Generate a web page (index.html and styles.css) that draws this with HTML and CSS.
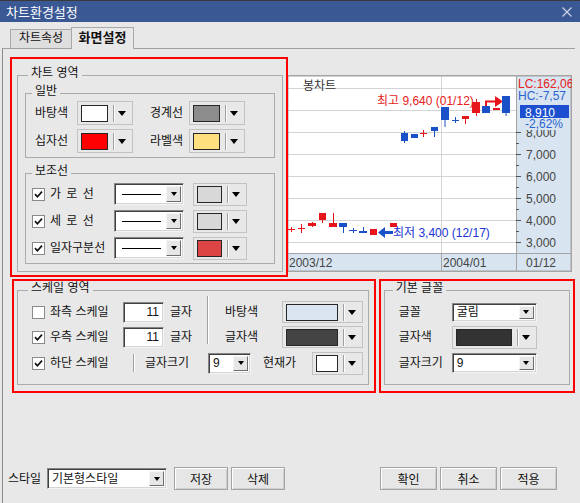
FILE: index.html
```html
<!DOCTYPE html>
<html lang="ko">
<head>
    <meta charset="UTF-8">
    <title>차트환경설정</title>
    <link rel="stylesheet" href="styles.css">
</head>
<body>
    <div class="titlebar">
        <span>차트환경설정</span>
        <svg class="close-btn" width="10" height="10" viewBox="0 0 10 10"><path d="M0.5 0.5L9.5 9.5M9.5 0.5L0.5 9.5"/></svg>
    </div>
    <div class="tabs">
        <div class="tab">차트속성</div>
        <div class="tab active">화면설정</div>
    </div>
    <div class="panel">
        <div class="top-row">
            <div class="redbox box-chart">
                <fieldset class="group g-chart">
                    <legend>차트 영역</legend>
                    <fieldset class="group g-general">
                        <legend>일반</legend>
                        <div class="grow first">
                            <span class="lbl c1">바탕색</span>
                            <div class="cbtn w56"><span class="swatch sw-white"></span><span class="csep"></span><span class="arrow"></span></div>
                            <span class="lbl c2">경계선</span>
                            <div class="cbtn w56"><span class="swatch sw-gray"></span><span class="csep"></span><span class="arrow"></span></div>
                        </div>
                        <div class="grow">
                            <span class="lbl c1">십자선</span>
                            <div class="cbtn w56"><span class="swatch sw-red"></span><span class="csep"></span><span class="arrow"></span></div>
                            <span class="lbl c2">라벨색</span>
                            <div class="cbtn w56"><span class="swatch sw-yellow"></span><span class="csep"></span><span class="arrow"></span></div>
                        </div>
                    </fieldset>
                    <fieldset class="group g-aux">
                        <legend>보조선</legend>
                        <div class="arow first">
                            <span class="check"><svg viewBox="0 0 11 11"><path d="M2 5.2l2.4 2.6 4.6-5.2"/></svg></span>
                            <span class="lbl aux-lbl spaced">가 로 선</span>
                            <div class="field line-combo"><span class="line-sample"></span><span class="dd"><span class="arrow sm"></span></span></div>
                            <div class="cbtn w54"><span class="swatch sw-light"></span><span class="csep"></span><span class="arrow"></span></div>
                        </div>
                        <div class="arow">
                            <span class="check"><svg viewBox="0 0 11 11"><path d="M2 5.2l2.4 2.6 4.6-5.2"/></svg></span>
                            <span class="lbl aux-lbl spaced">세 로 선</span>
                            <div class="field line-combo"><span class="line-sample"></span><span class="dd"><span class="arrow sm"></span></span></div>
                            <div class="cbtn w54"><span class="swatch sw-light"></span><span class="csep"></span><span class="arrow"></span></div>
                        </div>
                        <div class="arow">
                            <span class="check"><svg viewBox="0 0 11 11"><path d="M2 5.2l2.4 2.6 4.6-5.2"/></svg></span>
                            <span class="lbl aux-lbl">일자구분선</span>
                            <div class="field line-combo"><span class="line-sample"></span><span class="dd"><span class="arrow sm"></span></span></div>
                            <div class="cbtn w54"><span class="swatch sw-coral"></span><span class="csep"></span><span class="arrow"></span></div>
                        </div>
                    </fieldset>
                </fieldset>
            </div>

            <svg class="chart" width="285" height="197" viewBox="0 0 285 197">
                <rect x="0" y="0" width="229" height="178" fill="#fff"/>
                <rect x="229" y="0" width="56" height="178" fill="#d8e4f0"/>
                <rect x="0" y="178" width="285" height="19" fill="#d8e4f0"/>
                <path stroke="#d4d4d4" d="M0 13.5H229M0 35.5H229M0 57.5H229M0 79.5H229M0 101.5H229M0 123.5H229M0 145.5H229M0 167.5H229M154.5 0V178"/>
                <path stroke="#a4a4a4" d="M229.5 0V197M0 178.5H285M154.5 178V197"/>
                <rect x="0.75" y="0.75" width="283.5" height="195.5" fill="none" stroke="#a4a4a4" stroke-width="1.5"/>
                <path stroke="#555" d="M229 57.5h5M229 79.5h5M229 101.5h5M229 123.5h5M229 145.5h5M229 167.5h5M229 68.5h3M229 90.5h3M229 112.5h3M229 134.5h3M229 156.5h3"/>

                <text x="16" y="15" fill="#333">봉차트</text>
                <text x="90" y="30" fill="#e82020">최고 9,640 (01/12)</text>
                <text x="106" y="162" fill="#2034d4">최저 3,400 (12/17)</text>

                <g fill="#e8141c" stroke="#e8141c">
                    <path fill="none" d="M1 154.5H8M4.5 152V157M11 153.5H18M14.5 149V158M25.5 147V152M35.5 145V148M46.5 138V149M189.5 24V41M178.5 44V49M133 58.5H140M136.5 55V62"/>
                    <rect x="21" y="148" width="8" height="3" stroke="none"/>
                    <rect x="32" y="138" width="7" height="7" stroke="none"/>
                    <rect x="42" y="148" width="8" height="4" stroke="none"/>
                    <rect x="83" y="154" width="7" height="6" stroke="none"/>
                    <rect x="103" y="148" width="7" height="4" stroke="none"/>
                    <rect x="175" y="41" width="7" height="3" stroke="none"/>
                    <rect x="185" y="27" width="8" height="11" stroke="none"/>
                    <rect x="206" y="33" width="7" height="2" stroke="none"/>
                    <polyline fill="none" stroke-width="2" points="199,31 199,26.5 209,26.5"/>
                    <polygon stroke="none" points="208,21 216,26.5 208,32"/>
                </g>
                <g fill="#1a50c8" stroke="#1a50c8">
                    <path fill="none" d="M56.5 152V158M62 155.5H70M66.5 153V158M76.5 152V156M117.5 56V68M147.5 56V62M158 45V52M165 45.5H172M168.5 42V48M219 38V41"/>
                    <rect x="52" y="148" width="8" height="4" stroke="none"/>
                    <rect x="72" y="156" width="8" height="2" stroke="none"/>
                    <polygon stroke="none" points="91,157.5 98,152 98,163"/>
                    <rect x="97" y="156" width="9" height="3" stroke="none"/>
                    <rect x="114" y="58" width="7" height="8" stroke="none"/>
                    <rect x="124" y="59" width="7" height="4" stroke="none"/>
                    <rect x="144" y="52" width="7" height="4" stroke="none"/>
                    <rect x="154" y="32" width="8" height="13" stroke="none"/>
                    <rect x="195" y="31" width="8" height="7" stroke="none"/>
                    <rect x="215" y="21" width="8" height="17" stroke="none"/>
                </g>

                <text x="231" y="13" fill="#e82020">LC:162,06</text>
                <text x="231" y="25" fill="#2a64d0">HC:-7,57</text>
                <rect x="233" y="30" width="49" height="13" fill="#1c50d0"/>
                <text x="238" y="41.5" fill="#fff">8,910</text>
                <text x="239" y="61.5" fill="#444">8,000</text>
                <rect x="235" y="43" width="48" height="12" fill="#d8e4f0"/>
                <text x="238" y="53" fill="#2a64d0">-2,62%</text>
                <text x="239" y="83.5" fill="#444">7,000</text>
                <text x="239" y="105.5" fill="#444">6,000</text>
                <text x="239" y="127.5" fill="#444">5,000</text>
                <text x="239" y="149.5" fill="#444">4,000</text>
                <text x="239" y="171.5" fill="#444">3,000</text>

                <text x="2" y="192" fill="#444">2003/12</text>
                <text x="156" y="192" fill="#444">2004/01</text>
                <text x="239" y="192" fill="#444">01/12</text>
            </svg>
        </div>

        <div class="bottom-row">
            <div class="redbox box-scale">
                <fieldset class="group g-scale">
                    <legend>스케일 영역</legend>
                    <div class="sbody">
                        <div class="scale-top">
                            <div class="scol">
                                <div class="srow">
                                    <span class="check"></span>
                                    <span class="lbl s-lbl">좌측 스케일</span>
                                    <div class="field num">11</div>
                                    <span class="lbl unit">글자</span>
                                </div>
                                <div class="srow next">
                                    <span class="check"><svg viewBox="0 0 11 11"><path d="M2 5.2l2.4 2.6 4.6-5.2"/></svg></span>
                                    <span class="lbl s-lbl">우측 스케일</span>
                                    <div class="field num">11</div>
                                    <span class="lbl unit">글자</span>
                                </div>
                            </div>
                            <div class="vsep tall"></div>
                            <div class="scol right">
                                <div class="srow">
                                    <span class="lbl r-lbl">바탕색</span>
                                    <div class="cbtn w81"><span class="swatch sw-pale"></span><span class="csep"></span><span class="arrow"></span></div>
                                </div>
                                <div class="srow next">
                                    <span class="lbl r-lbl">글자색</span>
                                    <div class="cbtn w81"><span class="swatch sw-dark"></span><span class="csep"></span><span class="arrow"></span></div>
                                </div>
                            </div>
                        </div>
                        <div class="srow row3">
                            <span class="check"><svg viewBox="0 0 11 11"><path d="M2 5.2l2.4 2.6 4.6-5.2"/></svg></span>
                            <span class="lbl b-lbl">하단 스케일</span>
                            <div class="vsep short"></div>
                            <span class="lbl size-lbl">글자크기</span>
                            <div class="field combo size-combo"><span class="val">9</span><span class="dd"><span class="arrow sm"></span></span></div>
                            <span class="lbl cur-lbl">현재가</span>
                            <div class="cbtn w51"><span class="swatch sw-white"></span><span class="csep"></span><span class="arrow"></span></div>
                        </div>
                    </div>
                </fieldset>
            </div>
            <div class="redbox box-font">
                <fieldset class="group g-font">
                    <legend>기본 글꼴</legend>
                    <div class="fbody">
                        <div class="srow">
                            <span class="lbl f-lbl">글꼴</span>
                            <div class="field combo font-combo"><span class="val">굴림</span><span class="dd"><span class="arrow sm"></span></span></div>
                        </div>
                        <div class="srow next">
                            <span class="lbl f-lbl">글자색</span>
                            <div class="cbtn w85"><span class="swatch sw-ink"></span><span class="csep"></span><span class="arrow"></span></div>
                        </div>
                        <div class="srow row3">
                            <span class="lbl f-lbl">글자크기</span>
                            <div class="field combo fsize-combo"><span class="val">9</span><span class="dd"><span class="arrow sm"></span></span></div>
                        </div>
                    </div>
                </fieldset>
            </div>
        </div>

        <div class="footer">
            <span class="lbl style-lbl">스타일</span>
            <div class="field combo style-combo"><span class="val">기본형스타일</span><span class="dd"><span class="arrow sm"></span></span></div>
            <div class="btn save">저장</div>
            <div class="btn del">삭제</div>
            <div class="btn ok">확인</div>
            <div class="btn">취소</div>
            <div class="btn">적용</div>
        </div>
    </div>
</body>
</html>
```

FILE: styles.css
```css
body {
    margin: 0;
    width: 580px;
    height: 503px;
    overflow: hidden;
    background-color: #e8e8e8;
    font-family: "Liberation Sans", "Noto Sans CJK KR", sans-serif;
    font-size: 12px;
    color: #111;
}
.titlebar {
    height: 22px;
    box-sizing: border-box;
    border-top: 1px solid #3a3a3a;
    background-color: #3a5894;
    color: #fff;
    font-size: 13px;
    display: flex;
    align-items: center;
    justify-content: space-between;
    padding: 0 8px 0 6px;
}
.close-btn path {
    stroke: #c9d2e4;
    stroke-width: 1.2;
}
.tabs {
    display: flex;
    align-items: flex-end;
    height: 26px;
    padding-left: 10px;
}
.tab {
    width: 62px;
    height: 19px;
    box-sizing: border-box;
    border: 1px solid #a8a8a8;
    border-bottom: none;
    background-color: #dedede;
    text-align: center;
    line-height: 17px;
}
.tab.active {
    width: 63px;
    height: 22px;
    margin-left: -1px;
    margin-bottom: -1px;
    background-color: #e8e8e8;
    font-weight: bold;
    font-size: 13px;
    line-height: 20px;
    position: relative;
    z-index: 1;
}
.panel {
    margin-left: 2px;
    width: 573px;
    height: 455px;
    box-sizing: border-box;
    border-top: 1px solid #a0a0a0;
    border-left: 1px solid #8a8a8a;
    padding: 8px 0 0 7px;
}
.top-row {
    display: flex;
    align-items: flex-start;
}
.redbox {
    border: 2px solid #ff0000;
    box-sizing: border-box;
}
.box-chart {
    width: 278px;
    height: 220px;
    position: relative;
    z-index: 1;
}
.chart {
    display: block;
    flex: none;
    margin: 18px 0 0 -1px;
}
.chart text {
    font-family: "Liberation Sans", "Noto Sans CJK KR", sans-serif;
    font-size: 12px;
}

/* group boxes */
.group {
    margin: 0;
    padding: 0;
    min-width: 0;
    box-sizing: border-box;
    border: 1px solid #ababab;
}
.group legend {
    padding: 0 3px 4px;
    line-height: 14px;
    font-size: 12px;
}
.g-chart {
    margin: 7px 0 0 5px;
    width: 266px;
    padding-bottom: 7px;
}
.g-chart > legend {
    margin-left: 10px;
}
.g-general,
.g-aux {
    margin: 0 7px;
    padding-bottom: 4px;
}
.g-aux {
    margin-top: 6px;
}
.g-general legend,
.g-aux legend {
    margin-left: 6px;
}
.lbl {
    flex: none;
    line-height: 14px;
    white-space: nowrap;
}
.grow {
    display: flex;
    align-items: center;
    height: 24px;
    padding-left: 9px;
    margin-top: 4px;
}
.grow.first {
    margin-top: -1px;
}
.grow .c1 {
    width: 36px;
    margin-right: 6px;
}
.grow .c2 {
    width: 36px;
    margin: 0 3px 0 17px;
}
.arow {
    display: flex;
    align-items: center;
    height: 22px;
    padding-left: 6px;
    margin-top: 5px;
}
.arow.first {
    margin-top: 1px;
}
.aux-lbl {
    width: 64px;
}
.spaced {
    word-spacing: 2px;
}

/* controls */
.check {
    flex: none;
    width: 13px;
    height: 13px;
    box-sizing: border-box;
    background-color: #fff;
    border: 1px solid #8a8a8a;
    margin-right: 5px;
    display: flex;
}
.check svg {
    width: 11px;
    height: 11px;
}
.check path {
    fill: none;
    stroke: #111;
    stroke-width: 1.7;
}
.cbtn {
    flex: none;
    display: flex;
    align-items: center;
    height: 24px;
    box-sizing: border-box;
    border: 1px solid #c2c2c2;
    background-color: #e8e8e8;
    padding: 0 6px 0 3px;
}
.w56 { width: 56px; }
.w54 { width: 54px; height: 23px; margin-left: 9px; }
.w81 { width: 81px; height: 22px; }
.w51 { width: 51px; height: 23px; margin-left: 13px; }
.w85 { width: 85px; height: 23px; }
.swatch {
    flex: 1;
    height: 17px;
    box-sizing: border-box;
    border: 1px solid #262626;
}
.sw-white { background-color: #fff; }
.sw-gray { background-color: #8c8c8c; }
.sw-red { background-color: #ff0000; }
.sw-yellow { background-color: #ffdf7e; }
.sw-light { background-color: #d8d8d8; }
.sw-coral { background-color: #dd4444; }
.sw-pale { background-color: #dbe5f1; }
.sw-dark { background-color: #444; }
.sw-ink { background-color: #333; }
.csep {
    flex: none;
    width: 0;
    height: 17px;
    border-left: 1px solid #a0a0a0;
    border-right: 1px solid #fff;
    margin: 0 3px 0 5px;
}
.arrow {
    flex: none;
    width: 0;
    height: 0;
    border-left: 4.5px solid transparent;
    border-right: 4.5px solid transparent;
    border-top: 5px solid #000;
}
.arrow.sm {
    border-left-width: 3.5px;
    border-right-width: 3.5px;
    border-top-width: 4px;
}
.field {
    flex: none;
    display: flex;
    align-items: center;
    box-sizing: border-box;
    background-color: #fff;
    border: 1px solid;
    border-color: #858585 #f4f4f4 #f4f4f4 #858585;
    box-shadow: inset 1px 1px 0 #404040, inset -1px -1px 0 #d4d4d4;
    padding: 2px;
}
.dd {
    margin-left: auto;
    width: 15px;
    align-self: stretch;
    box-sizing: border-box;
    background-color: #e6e6e6;
    border: 1px solid;
    border-color: #f6f6f6 #6e6e6e #6e6e6e #f6f6f6;
    display: flex;
    align-items: center;
    justify-content: center;
}
.line-combo {
    width: 70px;
    height: 22px;
}
.line-sample {
    width: 39px;
    height: 1px;
    margin-left: 5px;
    background-color: #000;
}
.combo .val {
    padding-left: 2px;
    line-height: 14px;
}
.num {
    width: 41px;
    height: 21px;
    margin-left: 0;
    justify-content: flex-end;
    padding-right: 4px;
}
.vsep {
    flex: none;
    width: 0;
    border-left: 1px solid #a0a0a0;
    border-right: 1px solid #fff;
}

/* scale / font boxes */
.bottom-row {
    display: flex;
    margin-top: 2px;
}
.box-scale {
    margin-left: 2px;
    width: 365px;
    height: 114px;
}
.box-font {
    margin-left: 3px;
    width: 197px;
    height: 114px;
}
.g-scale {
    margin-left: 3px;
    width: 352px;
}
.g-font {
    margin-left: 3px;
    width: 186px;
}
.g-scale legend,
.g-font legend {
    margin-left: 10px;
}
.g-font legend {
    margin-left: 8px;
}
.sbody {
    padding: 1px 0 8px 14px;
}
.fbody {
    padding: 1px 0 8px 14px;
}
.scale-top {
    display: flex;
    align-items: flex-start;
}
.srow {
    display: flex;
    align-items: center;
    height: 24px;
}
.srow.next {
    margin-top: 1px;
}
.srow.row3 {
    margin-top: 1px;
    height: 26px;
}
.s-lbl { width: 73px; }
.unit { margin-left: 6px; width: 24px; }
.vsep.tall {
    height: 48px;
    margin: -4px 0 0 13px;
}
.scol.right {
    margin-left: 16px;
}
.r-lbl {
    width: 37px;
    margin-right: 20px;
}
.b-lbl { width: 67px; }
.vsep.short {
    height: 18px;
    margin-left: 16px;
}
.size-lbl {
    width: 48px;
    margin-left: 10px;
}
.size-combo {
    width: 43px;
    height: 21px;
    margin-left: 15px;
}
.cur-lbl {
    width: 36px;
    margin-left: 12px;
}
.f-lbl { width: 53px; }
.font-combo {
    width: 85px;
    height: 19px;
}
.fsize-combo {
    width: 85px;
    height: 20px;
}

/* footer */
.footer {
    display: flex;
    align-items: center;
    height: 23px;
    margin: 74px 18px 0 -2px;
}
.style-lbl {
    width: 36px;
    margin-right: 3px;
}
.style-combo {
    width: 120px;
    height: 21px;
}
.btn {
    flex: none;
    width: 57px;
    height: 23px;
    box-sizing: border-box;
    margin-left: 3px;
    border: 1px solid #a4a4a4;
    background-color: #e6e6e6;
    box-shadow: inset 1px 1px 0 #fff, inset -1px -1px 0 #cfcfcf;
    display: flex;
    align-items: center;
    justify-content: center;
}
.btn.save {
    width: 54px;
    margin-left: 7px;
}
.btn.del {
    width: 54px;
}
.btn.ok {
    margin-left: auto;
}
```
